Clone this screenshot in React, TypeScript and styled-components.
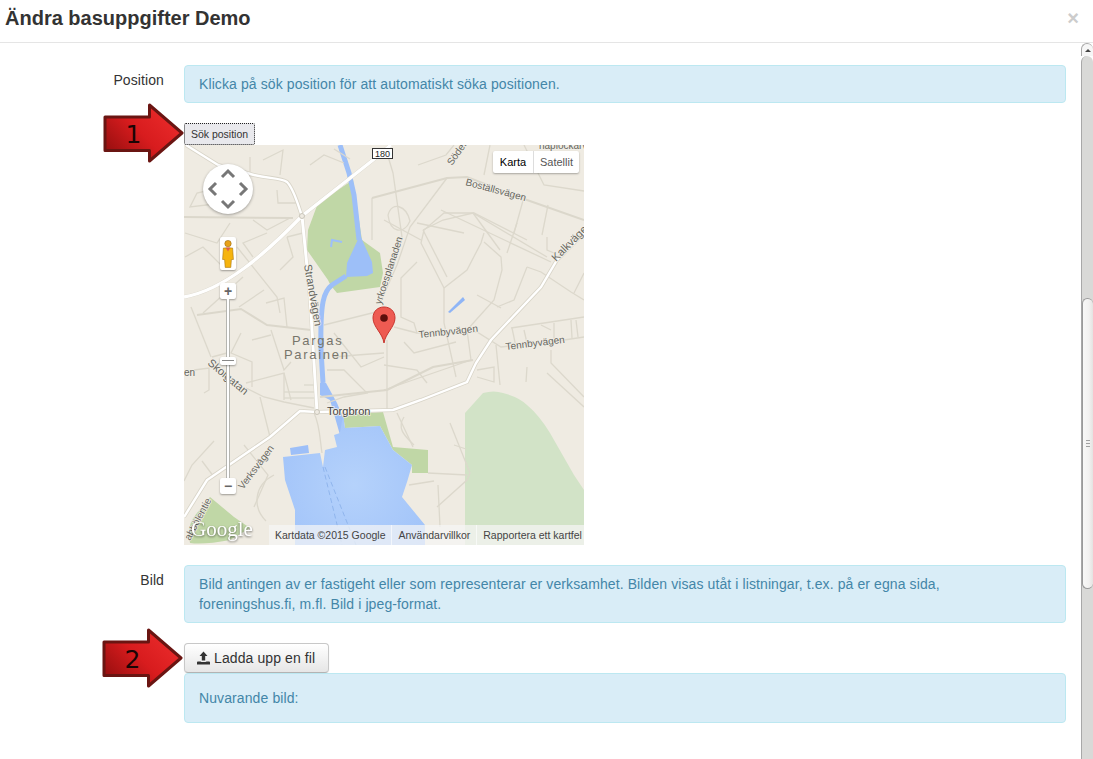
import React from "react"
import styled, { createGlobalStyle } from "styled-components"

/////////////////////////////////////////////////////////////////////////////

const MINOR_ROADS = [
  // north west
  "M66 12 L66 28 L63 48 L39 58 L6 62 L13 48 L26 45",
  "M93 45 L94 58 L113 58",
  "M79 15 L99 5 L96 30",
  "M69 75 L83 85 L106 73",
  "M83 88 L59 98 L69 112",
  "M103 92 L119 88",
  "M103 92 L109 112 L96 125",
  "M53 102 L93 152 L96 168",
  "M1 112 L19 102 L39 122",
  "M59 132 L19 168",
  "M46 78 L33 98 L1 88",
  "M126 20 L140 10 L160 18",
  // west
  "M7 162 L27 212",
  "M82 158 L100 153 L103 182",
  "M55 162 L80 145",
  "M87 185 L100 225 L107 217",
  "M57 188 L47 208 L68 217 L68 242",
  "M68 195 L87 190",
  "M28 212 L43 208",
  "M10 225 L25 223 L25 245 L20 248",
  "M62 238 L100 228 L107 255",
  "M100 228 L100 255",
  "M100 247 L132 247",
  "M100 253 L132 253",
  "M120 240 L132 240",
  "M62 243 L80 252 L100 257 L130 263",
  "M76 252 L86 292",
  "M150 188 L177 222 L200 212",
  "M143 225 L160 225 L183 248 L160 252 L143 258",
  "M150 212 L173 210 L200 208",
  "M140 180 L196 166",
  // south west
  "M60 300 L84 330 L70 362",
  "M18 316 L30 332",
  "M90 330 C70 340 68 362 82 376",
  "M0 336 L8 320 L30 296",
  "M130 268 C136 280 136 296 138 308",
  // centre north
  "M196 158 L218 92 L209 28 L203 8",
  "M188 53 L188 95",
  "M263 33 L226 82 L213 120 L196 158",
  "M204 70 C208 56 222 60 226 76 C220 90 206 88 204 70",
  "M234 20 L262 10 L270 0",
  "M239 85 L259 75 L289 68 L363 112",
  "M289 68 L316 105",
  "M239 85 L263 132",
  "M340 52 L330 88",
  "M364 60 L358 90",
  "M300 30 L306 0",
  "M340 0 L360 40 L400 46",
  "M150 4 L166 14",
  // east
  "M210 182 L233 188 L293 187 L317 202 L380 195 L400 192",
  "M327 183 L400 172",
  "M260 143 L237 98 L240 85 L260 68 L290 68 L343 95",
  "M257 65 L367 117",
  "M260 143 L260 178 L272 232",
  "M260 143 L283 125 L297 98 L300 88",
  "M300 97 L317 112 L318 125 L310 155 L283 185 L287 215",
  "M293 150 L317 163",
  "M323 108 L333 78",
  "M343 122 L357 127 L387 147 L400 155",
  "M343 122 L330 155 L313 162",
  "M233 117 L217 133 L217 172 L230 178 L233 188",
  "M220 197 L230 208 L272 197",
  "M200 220 L233 225 L243 238",
  "M200 245 L287 215",
  "M328 183 L332 202",
  "M340 185 L343 198",
  "M357 180 L367 185",
  "M370 178 L370 195",
  "M387 175 L388 193",
  "M392 175 L394 192",
  "M367 205 L367 218 L400 252",
  "M293 225 L310 222 L310 237 L293 232",
  "M343 222 L342 237",
  "M200 75 L237 95",
  "M233 78 L280 88",
  "M390 148 L400 128",
  "M363 92 L363 105 L370 108",
  // south east
  "M203 195 L203 265",
  "M253 362 L283 335 L286 328 L266 278",
  "M213 268 L229 302",
  "M220 272 C212 284 222 292 230 300",
  "M244 328 L283 330",
  "M225 340 L250 336",
  "M254 340 L256 382",
  "M270 300 L282 304",
  "M312 200 L316 240",
  "M363 228 L400 262",
]

const THICK_ROADS = [
  "M0 72 L109 73",
  "M13 170 L57 164 L83 180 L127 185",
  "M136 252 L203 245 L249 222 L289 215",
  "M188 53 L263 33 L283 32 L343 55 L400 75",
]

/////////////////////////////////////////////////////////////////////////////

const MapDrawing: React.FC = () => (
  <svg width="400" height="400" viewBox="0 0 400 400">
    <defs>
      <radialGradient id="bay" cx="170" cy="340" r="90" gradientUnits="userSpaceOnUse">
        <stop offset="0%" stopColor="#b5d2fb" />
        <stop offset="100%" stopColor="#a1c3f9" />
      </radialGradient>
    </defs>
    <rect width="400" height="400" fill="#efebe2" />

    {/* parks */}
    <path fill="#c0d7a6" d="M134 58 L169 35 L178 95 L196 108 L199 128 L196 142 L153 148 Q146 140 144 135 L123 105 L124 85 Z" />
    <polygon fill="#c0d7a6" points="159,270 199,267 209,302 244,305 244,328 228,328 228,320 209,305 196,281 161,283" />
    <path fill="#c0d7a6" d="M26 352 L50 372 L66 383 L46 395 Q20 400 6 398 Q2 380 13 368 Z" />
    <path fill="#d2e3c7" d="M281 268 L299 248 Q310 245 319 248 Q335 252 343 260 Q355 270 366 288 L390 330 L400 345 L400 400 L281 400 Z" />

    {/* water */}
    <path d="M156 0 L165 28 L170 50 L175 95" fill="none" stroke="#9dbff8" strokeWidth="5" />
    <path d="M162 131 L148 140 C140 146 136 156 137 205 L139 238" fill="none" stroke="#9dbff8" strokeWidth="5" />
    <polygon fill="#9dbff8" points="176,90 188,117 189,128 183,131 162,132 163,118 169,105" />
    <polygon fill="#9dbff8" points="136,238 142,238 153,258 160,275 156,290 146,255 136,250" />
    <path fill="url(#bay)" d="M159 270 L156 288 L150 290 L153 302 L141 305 L139 322 L136 308 L99 312 L101 335 L111 365 L111 400 L241 400 L241 380 L218 352 Q224 335 228 320 L209 305 L196 281 L161 283 Z" />
    <polygon fill="#9dbff8" points="106,303 124,300 125,308 107,310" />
    <polygon fill="#8fb5f6" points="264,167 279,152 281,155 266,168" />
    <path d="M147 102 L148 95 L158 97" fill="none" stroke="#9dbff8" strokeWidth="2" />
    <path d="M139 322 L158 400 M141 322 L172 400" fill="none" stroke="#88aee8" strokeWidth="0.8" strokeDasharray="5 3" />

    {/* minor roads */}
    <g fill="none" stroke="#dcd8cc" strokeWidth="1.3">
      {MINOR_ROADS.map((d) => (
        <path key={d} d={d} />
      ))}
    </g>
    <g fill="none" stroke="#dbd7cb" strokeWidth="2">
      {THICK_ROADS.map((d) => (
        <path key={d} d={d} />
      ))}
    </g>

    {/* main roads */}
    <g fill="none" stroke="#d8d4c8" strokeWidth="4">
      <path d="M0 152 C40 145 80 110 118 71 L189 15 L207 0" />
      <path d="M118 71 L126 152 L133 267" />
      <path d="M2 0 L34 20 L63 28 C80 34 96 32 103 37 C110 44 114 60 118 71" />
      <path d="M0 372 L23 335 L86 292 L116 266 L133 267 L209 265 L237 255 L283 237 L292 218 L307 195 L357 142 L373 115 L400 88" />
    </g>
    <g fill="none" stroke="#ffffff">
      <path strokeWidth="3.4" d="M0 152 C40 145 80 110 118 71 L189 15 L207 0" />
      <path strokeWidth="3" d="M118 71 L126 152 L133 267" />
      <path strokeWidth="2.4" d="M2 0 L34 20 L63 28 C80 34 96 32 103 37 C110 44 114 60 118 71" />
      <path strokeWidth="2.4" d="M0 372 L23 335 L86 292 L116 266 L133 267 L209 265 L237 255 L283 237 L292 218 L307 195 L357 142 L373 115 L400 88" />
    </g>
    <circle cx="118" cy="71" r="2.5" fill="#efebe2" stroke="#c9c5b9" />
    <circle cx="133" cy="267" r="2.5" fill="#efebe2" stroke="#c9c5b9" />

    {/* labels */}
    <MapLabels>
      <text transform="translate(120 120) rotate(80)" fontSize={11}>Strandvägen</text>
      <text transform="translate(197 160) rotate(-72)">yrkoesplanaden</text>
      <text transform="translate(235 193) rotate(-6)">Tennbyvägen</text>
      <text transform="translate(322 205) rotate(-7)">Tennbyvägen</text>
      <text transform="translate(281 40) rotate(15)">Boställsvägen</text>
      <text transform="translate(372 117) rotate(-45)" fontSize={11}>Kalkvägen</text>
      <text transform="translate(268 21) rotate(-55)">Söder</text>
      <text transform="translate(23 219) rotate(40)" fontSize={11}>Skolgatan</text>
      <text x="0" y="231">en</text>
      <text transform="translate(59 345) rotate(-53)">Verksvägen</text>
      <text transform="translate(6 396) rotate(-62)">abbölentie</text>
      <text x="355" y="4">näplockarv</text>
    </MapLabels>
    <PlaceLabel x="108" y="200">Pargas</PlaceLabel>
    <PlaceLabel x="100" y="214">Parainen</PlaceLabel>
    <BridgeLabel x="143" y="270">Torgbron</BridgeLabel>

    {/* road shield */}
    <rect x="188.5" y="3.5" width="20" height="10" fill="#ffffff" stroke="#333333" />
    <ShieldLabel x="198.5" y="12" textAnchor="middle">
      180
    </ShieldLabel>

    <GoogleMark x="7" y="391">
      Google
    </GoogleMark>
  </svg>
)

const PanIcon: React.FC = () => (
  <svg width="50" height="50" viewBox="0 0 50 50">
    <path
      d="M19 13 L25 7 L31 13 M13 19 L7 25 L13 31 M37 19 L43 25 L37 31 M19 37 L25 43 L31 37"
      fill="none"
      stroke="#777777"
      strokeWidth="3"
    />
  </svg>
)

const Pegman: React.FC = () => (
  <svg width="12" height="28" viewBox="0 0 12 28">
    <circle cx="6" cy="3.6" r="3.2" fill="#e8a21a" stroke="#9a6a10" strokeWidth="0.6" />
    <path
      d="M1.4 8 L10.6 8 L11.4 19.5 L9.4 19.5 L8.8 27.4 L3.2 27.4 L2.6 19.5 L0.6 19.5 Z"
      fill="#f6b40f"
      stroke="#a87510"
      strokeWidth="0.6"
    />
    <path d="M3.5 7.6 L8.5 7.6 L6 11.5 Z" fill="#e0604a" />
  </svg>
)

const Marker: React.FC = () => (
  <svg width="24" height="38" viewBox="0 0 24 38">
    <path
      d="M12 37 C10.5 27 1 21 1 12 C1 5 6 1 12 1 C18 1 23 5 23 12 C23 21 13.5 27 12 37 Z"
      fill="#ee5b52"
      stroke="#c8352e"
    />
    <circle cx="12" cy="12" r="3.8" fill="#5b0f0c" />
  </svg>
)

interface ArrowProps {
  number: string
}

const Arrow: React.FC<ArrowProps> = ({ number }) => (
  <svg width="82" height="60" viewBox="0 0 82 60">
    <defs>
      <linearGradient id={`arrow${number}`} x1="0" y1="1" x2="1" y2="0.3">
        <stop offset="0%" stopColor="#8a0c0c" />
        <stop offset="55%" stopColor="#d81c1e" />
        <stop offset="100%" stopColor="#ea2b2b" />
      </linearGradient>
    </defs>
    <path
      d="M2 14 L46.5 14 L46.5 2 L79 30 L46.5 58 L46.5 47.5 L2 47.5 Z"
      fill={`url(#arrow${number})`}
      stroke="#6a1512"
      strokeWidth="3"
      strokeLinejoin="round"
    />
    <ArrowNumber x="30.5" y="40" textAnchor="middle">
      {number}
    </ArrowNumber>
  </svg>
)

const UploadIcon: React.FC = () => (
  <svg width="13" height="14" viewBox="0 0 13 14">
    <path d="M6.5 0.5 L10.5 5 L8.2 5 L8.2 9.5 L4.8 9.5 L4.8 5 L2.5 5 Z" fill="#333333" />
    <path d="M0 13.5 L0 11.5 C0 10.8 0.5 10.5 1.1 10.5 L3.5 10.5 L4.5 11 L8.5 11 L9.5 10.5 L11.9 10.5 C12.5 10.5 13 10.8 13 11.5 L13 13.5 Z" fill="#333333" />
  </svg>
)

const App: React.FC = () => {
  return (
    <Page>
      <GlobalStyle />
      <Header>
        <Title>Ändra basuppgifter Demo</Title>
        <Close>×</Close>
      </Header>
      <Body>
        <Content>
          <Row>
            <Label>Position</Label>
            <Field>
              <Alert>Klicka på sök position för att automatiskt söka positionen.</Alert>
              <ArrowOne>
                <Arrow number="1" />
              </ArrowOne>
              <SearchButton>Sök position</SearchButton>
              <MapBox>
                <MapDrawing />
                <PanControl>
                  <PanIcon />
                </PanControl>
                <PegmanBox>
                  <Pegman />
                </PegmanBox>
                <ZoomPlus>+</ZoomPlus>
                <ZoomTrack />
                <ZoomHandle />
                <ZoomMinus>−</ZoomMinus>
                <MapType>
                  <MapTypeItem $active>Karta</MapTypeItem>
                  <MapTypeItem>Satellit</MapTypeItem>
                </MapType>
                <MarkerPin>
                  <Marker />
                </MarkerPin>
                <Attribution>
                  <AttributionItem>Kartdata ©2015 Google</AttributionItem>
                  <AttributionItem>Användarvillkor</AttributionItem>
                  <AttributionItem>Rapportera ett kartfel</AttributionItem>
                </Attribution>
              </MapBox>
            </Field>
          </Row>
          <Row>
            <Label>Bild</Label>
            <Field>
              <Alert>
                Bild antingen av er fastigeht eller som representerar er verksamhet. Bilden visas utåt i
                listningar, t.ex. på er egna sida, foreningshus.fi, m.fl. Bild i jpeg-format.
              </Alert>
              <ArrowTwo>
                <Arrow number="2" />
              </ArrowTwo>
              <UploadButton>
                <UploadIcon />
                Ladda upp en fil
              </UploadButton>
              <Alert>Nuvarande bild:</Alert>
            </Field>
          </Row>
        </Content>
        <Scrollbar>
          <ScrollUp />
          <ScrollTrack>
            <ScrollThumb>
              <ScrollGrip />
            </ScrollThumb>
          </ScrollTrack>
        </Scrollbar>
      </Body>
    </Page>
  )
}

/////////////////////////////////////////////////////////////////////////////

const GlobalStyle = createGlobalStyle`
  html, body {
    margin: 0;
    padding: 0;
    background: #ffffff;
    overflow: hidden;
  }
`

const Page = styled.div`
  width: 1093px;
  height: 759px;
  display: flex;
  flex-direction: column;
  overflow: hidden;
  font-family: "Liberation Sans", Arial, sans-serif;
  font-size: 14px;
  line-height: 20px;
  letter-spacing: 0.1px;
  color: #333333;
`

const Header = styled.div`
  height: 43px;
  flex: none;
  display: flex;
  align-items: center;
  justify-content: space-between;
  padding: 0 14px 7px 5px;
  box-sizing: border-box;
  border-bottom: 1px solid #e5e5e5;
`

const Title = styled.h3`
  margin: 0;
  font-size: 20px;
  line-height: 30px;
  font-weight: bold;
  letter-spacing: 0;
  color: #333333;
`

const Close = styled.span`
  font-size: 20px;
  font-weight: bold;
  line-height: 20px;
  color: #cccccc;
`

const Body = styled.div`
  flex: 1;
  display: flex;
  min-height: 0;
`

const Content = styled.div`
  flex: 1;
  padding: 22px 15px 0 0;
`

const Row = styled.div`
  display: grid;
  grid-template-columns: 164px 1fr;
  column-gap: 20px;
  margin-bottom: 20px;
`

const Label = styled.div`
  padding-top: 5px;
  text-align: right;
`

const Field = styled.div`
  position: relative;
  display: flex;
  flex-direction: column;
  align-items: flex-start;
`

const Alert = styled.div`
  align-self: stretch;
  padding: 8px 35px 8px 14px;
  border: 1px solid #bce8f1;
  border-radius: 4px;
  background: #d9edf7;
  color: #4386a8;
  margin-bottom: 20px;

  &:last-child {
    margin-bottom: 0;
    padding: 14px;
  }
`

const SearchButton = styled.button`
  height: 22px;
  width: 71px;
  padding: 0;
  background: #e9e9ed;
  border: 1px dotted #222222;
  border-radius: 2px;
  font-family: "Liberation Sans", Arial, sans-serif;
  font-size: 10.5px;
  color: #333333;
`

const MapBox = styled.div`
  position: relative;
  width: 400px;
  height: 400px;
  overflow: hidden;
  letter-spacing: 0;

  svg {
    display: block;
  }
`

const MapLabels = styled.g`
  font-family: "Liberation Sans", Arial, sans-serif;
  font-size: 10px;
  fill: #66665e;
  stroke: #f1eee6;
  stroke-width: 1.5px;
  paint-order: stroke;
`

const PlaceLabel = styled.text`
  font-family: "Liberation Sans", Arial, sans-serif;
  font-size: 13px;
  letter-spacing: 1.7px;
  fill: #77756b;
`

const BridgeLabel = styled.text`
  font-family: "Liberation Sans", Arial, sans-serif;
  font-size: 11px;
  fill: #444444;
  stroke: #f1eee6;
  stroke-width: 1.5px;
  paint-order: stroke;
`

const ShieldLabel = styled.text`
  font-family: "Liberation Sans", Arial, sans-serif;
  font-size: 9px;
  fill: #222222;
`

const GoogleMark = styled.text`
  font-family: "Liberation Serif", serif;
  font-size: 21px;
  fill: #ffffff;
  filter: drop-shadow(0 1px 1px rgba(0, 0, 0, 0.55));
`

const PanControl = styled.div`
  position: absolute;
  left: 19px;
  top: 19px;
  width: 50px;
  height: 50px;
  border-radius: 50%;
  background: #ffffff;
  box-shadow: 0 1px 3px rgba(0, 0, 0, 0.35);
`

const PegmanBox = styled.div`
  position: absolute;
  left: 36px;
  top: 92px;
  width: 16px;
  height: 33px;
  display: flex;
  align-items: center;
  justify-content: center;
  background: #ffffff;
  border-radius: 2px;
  box-shadow: 0 1px 2px rgba(0, 0, 0, 0.35);
`

const ZoomButton = styled.div`
  position: absolute;
  left: 36px;
  width: 16px;
  height: 16px;
  display: flex;
  align-items: center;
  justify-content: center;
  background: #ffffff;
  border-radius: 2px;
  box-shadow: 0 1px 2px rgba(0, 0, 0, 0.35);
  font-size: 14px;
  font-weight: bold;
  color: #666666;
`

const ZoomPlus = styled(ZoomButton)`
  top: 138px;
`

const ZoomMinus = styled(ZoomButton)`
  top: 333px;
`

const ZoomTrack = styled.div`
  position: absolute;
  left: 42px;
  top: 154px;
  width: 4px;
  height: 180px;
  box-sizing: border-box;
  background: #ffffff;
  border-left: 1px solid #b5b5b0;
  border-right: 1px solid #b5b5b0;
`

const ZoomHandle = styled.div`
  position: absolute;
  left: 36px;
  top: 212px;
  width: 16px;
  height: 8px;
  box-sizing: border-box;
  padding-top: 3px;
  background: #ffffff;
  border-radius: 2px;
  box-shadow: 0 1px 2px rgba(0, 0, 0, 0.35);

  &::after {
    content: "";
    display: block;
    height: 1px;
    margin: 0 2px;
    background: #888888;
  }
`

const MapType = styled.div`
  position: absolute;
  left: 309px;
  top: 6px;
  display: flex;
  height: 22px;
  background: #ffffff;
  border-radius: 2px;
  box-shadow: 0 1px 2px rgba(0, 0, 0, 0.3);
  font-size: 11px;
  line-height: 22px;
`

const MapTypeItem = styled.div<{ $active?: boolean }>`
  width: ${(p) => (p.$active ? "40px" : "45px")};
  text-align: center;
  color: ${(p) => (p.$active ? "#000000" : "#565656")};
  border-right: ${(p) => (p.$active ? "1px solid #dddddd" : "none")};
`

const MarkerPin = styled.div`
  position: absolute;
  left: 188px;
  top: 161px;
`

const Attribution = styled.div`
  position: absolute;
  left: 85px;
  right: 0;
  bottom: 0;
  height: 20px;
  display: flex;
  font-size: 10.5px;
  line-height: 20px;
  color: #444444;
`

const AttributionItem = styled.div`
  padding: 0 6px;
  white-space: nowrap;
  background: rgba(245, 245, 245, 0.72);
  border-right: 1px solid rgba(255, 255, 255, 0.6);
`

const ArrowOverlay = styled.div`
  position: absolute;
  width: 82px;
  height: 60px;

  svg {
    display: block;
  }
`

const ArrowOne = styled(ArrowOverlay)`
  left: -81px;
  top: 38px;
`

const ArrowTwo = styled(ArrowOverlay)`
  left: -82px;
  top: 63px;
`

const ArrowNumber = styled.text`
  font-family: "DejaVu Sans", sans-serif;
  font-size: 25px;
  fill: #1a0505;
`

const UploadButton = styled.button`
  display: flex;
  align-items: center;
  gap: 4px;
  height: 30px;
  width: 145px;
  padding: 0 0 0 12px;
  box-sizing: border-box;
  border: 1px solid #c8c8c8;
  border-bottom-color: #b3b3b3;
  border-radius: 4px;
  background: linear-gradient(180deg, #ffffff 0%, #e6e6e6 100%);
  box-shadow: inset 0 1px 0 rgba(255, 255, 255, 0.2), 0 1px 2px rgba(0, 0, 0, 0.05);
  font-family: "Liberation Sans", Arial, sans-serif;
  font-size: 14px;
  line-height: 20px;
  letter-spacing: 0.1px;
  color: #333333;
`

const Scrollbar = styled.div`
  flex: none;
  width: 12px;
  display: flex;
  flex-direction: column;
  background: #ffffff;
`

const ScrollUp = styled.div`
  height: 13px;
  flex: none;
  box-sizing: border-box;
  border: 1px solid #a8a8a8;
  border-bottom: none;
  border-right: none;
  border-radius: 6px 6px 0 0;
  background: #f6f6f6;
  display: flex;
  align-items: center;
  justify-content: center;

  &::after {
    content: "";
    border-left: 3px solid transparent;
    border-right: 3px solid transparent;
    border-bottom: 3px solid #444444;
  }
`

const ScrollTrack = styled.div`
  flex: 1;
  box-sizing: border-box;
  padding-top: 242px;
  background: #d9d9d7;
  border-left: 1px solid #a8a8a8;
  border-radius: 6px 6px 0 0;
`

const ScrollThumb = styled.div`
  height: 291px;
  box-sizing: border-box;
  display: flex;
  align-items: center;
  justify-content: center;
  background: linear-gradient(90deg, #f8f8f7 0%, #f2f1f0 60%, #e4e3e1 100%);
  border: 1px solid #9a9a9a;
  border-right: none;
  border-radius: 6px;
`

const ScrollGrip = styled.div`
  width: 4px;
  height: 5px;
  border-top: 1px solid #a0a0a0;
  border-bottom: 1px solid #a0a0a0;
  background: linear-gradient(#f2f1f0 40%, #a0a0a0 40%, #a0a0a0 60%, #f2f1f0 60%);
`

export default App
